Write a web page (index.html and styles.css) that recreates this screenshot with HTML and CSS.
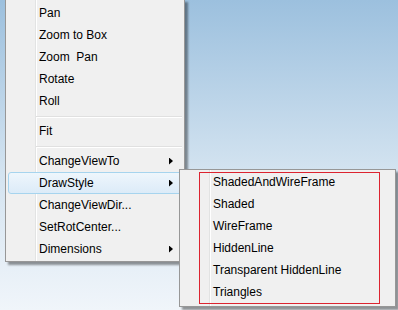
FILE: index.html
```html
<!DOCTYPE html>
<html lang="en">
  <head>
    <meta charset="UTF-8" />
    <title>View menu</title>
    <link rel="stylesheet" href="styles.css">
  </head>

  <body>
    <!-- Context menu of the 3D view -->
    <div class="menu main-menu">
      <div class="item">Pan</div>
      <div class="item">Zoom to Box</div>
      <div class="item">Zoom&nbsp; Pan</div>
      <div class="item">Rotate</div>
      <div class="item">Roll</div>
      <div class="sep"></div>
      <div class="item">Fit</div>
      <div class="sep"></div>
      <div class="item has-sub">ChangeViewTo</div>
      <div class="item has-sub active">
        <span>DrawStyle</span>
        <!-- Opened submenu -->
        <div class="menu sub-menu">
          <div class="item">ShadedAndWireFrame</div>
          <div class="item">Shaded</div>
          <div class="item">WireFrame</div>
          <div class="item">HiddenLine</div>
          <div class="item">Transparent HiddenLine</div>
          <div class="item">Triangles</div>
          <div class="mark"></div>
        </div>
      </div>
      <div class="item">ChangeViewDir...</div>
      <div class="item">SetRotCenter...</div>
      <div class="item has-sub">Dimensions</div>
    </div>
  </body>
</html>
```

FILE: styles.css
```css
html,
body {
  margin: 0;
  height: 100%;
}

body {
  position: relative;
  overflow: hidden;
  font-family: "Liberation Sans", Arial, sans-serif;
  font-size: 12px;
  color: #000;
  background: linear-gradient(#9cc0de, #d3e3f0 55%, #f0f5fa);
}

/* Menu box */
.menu {
  position: absolute;
  box-sizing: border-box;
  border: 1px solid #979797;
  background: linear-gradient(
    to right,
    #f0f0f0 29px,
    #e2e3e3 29px,
    #e2e3e3 30px,
    #ffffff 30px,
    #ffffff 31px,
    #f0f0f0 31px
  );
  box-shadow: 3px 3px 2px rgba(0, 0, 0, 0.4);
}

.main-menu {
  left: 5px;
  top: -1px;
  width: 180px;
  padding: 2px 0 1px;
}

.sub-menu {
  left: 170px;
  top: -4px;
  width: 217px;
  padding: 1px 0 3px;
}

/* Menu rows */
.item {
  position: relative;
  display: flex;
  align-items: center;
  box-sizing: border-box;
  height: 22px;
  line-height: 20px;
  margin: 0 2px;
  padding: 0 8px 0 30px;
  border: 1px solid transparent;
  border-radius: 3px;
  white-space: nowrap;
}

.has-sub::after {
  content: "";
  margin-left: auto;
  width: 4px;
  height: 7px;
  background: #000;
  clip-path: polygon(0 0, 100% 50%, 0 100%);
}

.active {
  border-color: #a6d4ee;
  background: linear-gradient(#eef6fc, #dcebf8);
}

.sep {
  height: 1px;
  margin: 4px 2px 2px 30px;
  background: #e0e0e0;
  border-bottom: 1px solid #ffffff;
}

/* Red frame drawn over the submenu */
.mark {
  position: absolute;
  left: 19px;
  top: 2px;
  width: 181px;
  height: 132px;
  box-sizing: border-box;
  border: 1px solid #dc2430;
}
```
